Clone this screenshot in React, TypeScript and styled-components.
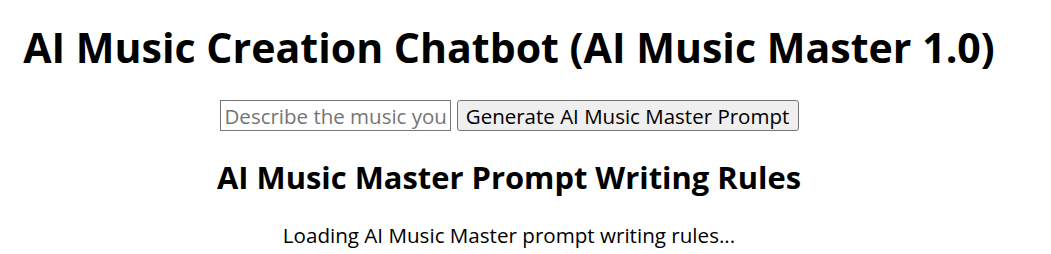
import styled, { createGlobalStyle } from "styled-components";

const GlobalStyle = createGlobalStyle`
  body {
    margin: 0;
    background: #ffffff;
    color: #000000;
    font-family: "Open Sans", "Noto Sans", sans-serif;
  }
`;

const Page = styled.div`
  width: 1018px;
  padding-top: 21px;
  text-align: center;
`;

const Title = styled.h1`
  margin: 0;
  font-size: 41.1px;
  line-height: 52px;
  font-weight: 700;
`;

const PromptForm = styled.div`
  margin-top: 27px;
  display: flex;
  justify-content: center;
  gap: 6px;
`;

const PromptInput = styled.input`
  box-sizing: border-box;
  width: 231px;
  height: 31px;
  padding: 0 4px;
  border: 1px solid #767676;
  border-radius: 0;
  font-family: inherit;
  font-size: 20.5px;
  color: #000000;
  &::placeholder {
    color: #757575;
  }
`;

const GenerateButton = styled.button`
  box-sizing: border-box;
  width: 342px;
  height: 31px;
  padding: 0;
  border: 1px solid #767676;
  border-radius: 3px;
  background: #efefef;
  font-family: inherit;
  font-size: 20.5px;
  color: #000000;
`;

const RulesHeading = styled.h2`
  margin: 26px 0 0;
  font-size: 30.9px;
  line-height: 40px;
  font-weight: 700;
`;

const Status = styled.p`
  margin: 25px 0 0;
  font-size: 20.6px;
  line-height: 27px;
`;

export default function App() {
  return (
    <>
      <GlobalStyle />
      <Page>
        <Title>AI Music Creation Chatbot (AI Music Master 1.0)</Title>
        <PromptForm>
          <PromptInput type="text" placeholder="Describe the music you want" />
          <GenerateButton>Generate AI Music Master Prompt</GenerateButton>
        </PromptForm>
        <RulesHeading>AI Music Master Prompt Writing Rules</RulesHeading>
        <Status>Loading AI Music Master prompt writing rules...</Status>
      </Page>
    </>
  );
}
